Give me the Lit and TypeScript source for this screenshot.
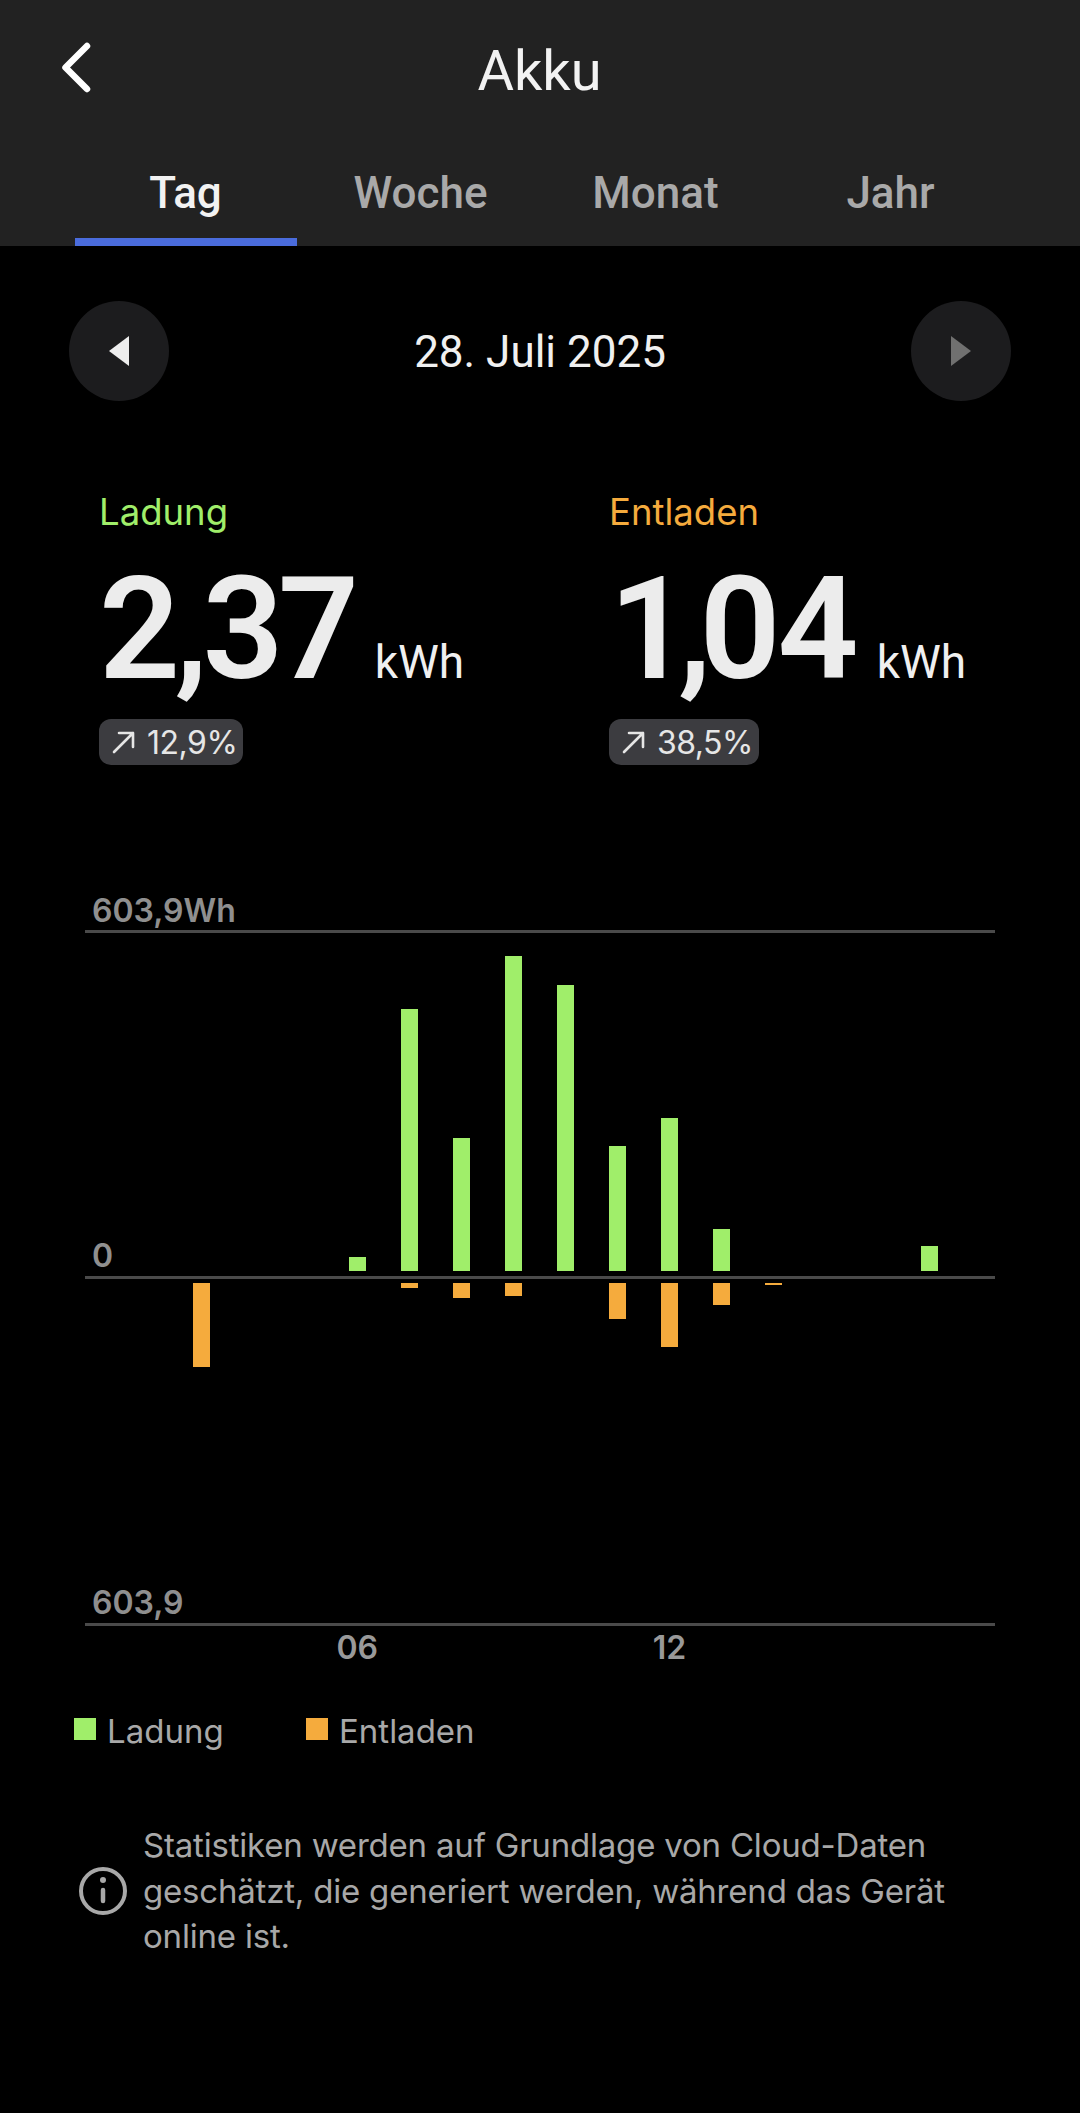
import { LitElement, html, css, svg } from 'lit';
import { customElement, state } from 'lit/decorators.js';

interface Stat {
    label: string;
    tone: string;
    whole: string;
    decimals: string;
    wholeTracking: number;
    decimalsTracking: number;
    change: string;
}

// hour -> height in px of the bars above and below the zero line
const HOURS: { hour: number; up: number; down: number }[] = [
    { hour: 2, up: 0, down: 0 },
    { hour: 3, up: 0, down: 84 },
    { hour: 4, up: 0, down: 0 },
    { hour: 5, up: 0, down: 0 },
    { hour: 6, up: 14, down: 0 },
    { hour: 7, up: 262, down: 5 },
    { hour: 8, up: 133, down: 15 },
    { hour: 9, up: 315, down: 13 },
    { hour: 10, up: 286, down: 0 },
    { hour: 11, up: 125, down: 36 },
    { hour: 12, up: 153, down: 64 },
    { hour: 13, up: 42, down: 22 },
    { hour: 14, up: 0, down: 2 },
    { hour: 15, up: 0, down: 0 },
    { hour: 16, up: 0, down: 0 },
    { hour: 17, up: 25, down: 0 },
];

@customElement('app-root')
export class AppRoot extends LitElement {
    static override styles = css`
        :host {
            display: block;
            width: 1080px;
            height: 2113px;
            background: #000;
            font-family: 'Inter', 'Roboto', sans-serif;
            overflow: hidden;
        }

        .header {
            background: #222222;
            height: 246px;
            display: flex;
            flex-direction: column;
        }

        .topbar {
            height: 142px;
            display: grid;
            grid-template-columns: 1fr auto 1fr;
            align-items: center;
            padding-left: 60px;
        }

        .topbar svg {
            display: block;
            width: 32px;
            height: 51px;
            margin-top: -7px;
        }

        .title {
            font-family: 'Roboto', sans-serif;
            font-size: 56px;
            line-height: 60px;
            color: #f2f2f2;
            margin-left: -61px;
        }

        .tabs {
            flex: 1;
            display: grid;
            grid-template-columns: repeat(4, 235px);
            padding-left: 68px;
        }

        .tab {
            display: flex;
            flex-direction: column;
            align-items: center;
            justify-content: flex-end;
            font-family: 'Roboto', sans-serif;
            font-weight: 500;
            font-size: 44px;
            line-height: 52px;
            color: #a9a9a9;
        }

        .tab span {
            margin-bottom: 19px;
        }

        .tab::after {
            content: '';
            display: block;
            width: 222px;
            height: 8px;
            background: transparent;
        }

        .tab.active {
            color: #f2f2f2;
        }

        .tab.active::after {
            background: #4a6cdc;
        }

        .datebar {
            display: flex;
            justify-content: space-between;
            align-items: center;
            padding: 55px 69px 0;
        }

        .round {
            width: 100px;
            height: 100px;
            border-radius: 50%;
            background: #1c1c1e;
            display: flex;
            align-items: center;
            justify-content: center;
        }

        .date {
            font-family: 'Roboto', sans-serif;
            font-size: 44px;
            line-height: 52px;
            color: #f0f0f0;
            padding-top: 2px;
        }

        .stats {
            display: grid;
            grid-template-columns: 510px 1fr;
            padding: 89px 0 0 99px;
        }

        .stat-label {
            font-size: 36.5px;
            line-height: 44px;
        }

        .stat-main {
            display: flex;
            align-items: baseline;
            margin-top: 16px;
            height: 160px;
        }

        .number {
            font-family: 'Roboto', sans-serif;
            font-weight: 600;
            font-size: 142px;
            line-height: 160px;
            color: #ececec;
        }

        .unit {
            font-family: 'Roboto', sans-serif;
            font-size: 46px;
            color: #f0f0f0;
            margin-left: 21px;
        }

        .badge {
            display: inline-flex;
            align-items: center;
            gap: 12px;
            height: 46px;
            padding: 0 6px 0 12px;
            border-radius: 12px;
            background: #3c3c40;
            font-size: 32px;
            letter-spacing: -0.5px;
            color: #e6e6e6;
            margin-top: 9px;
        }

        .chart {
            margin: 131px 85px 0;
            width: 910px;
        }

        .axis-row {
            height: 34px;
            padding: 0 0 2px 7px;
            box-sizing: border-box;
            font-weight: 600;
            font-size: 32px;
            line-height: 34px;
            color: #8f8f8f;
            display: flex;
            align-items: flex-end;
        }

        .line {
            height: 3px;
            background: #4a4a4a;
        }

        .plot {
            position: relative;
            display: grid;
            grid-template-columns: repeat(16, 52.05px);
            padding-left: 38px;
        }

        .plot.up {
            height: 343px;
            align-items: end;
            padding-bottom: 5px;
            box-sizing: border-box;
        }

        .plot.down {
            height: 344px;
            align-items: start;
            padding-top: 4px;
            box-sizing: border-box;
        }

        .plot > div {
            display: flex;
            justify-content: center;
        }

        .plot > .axis-label {
            position: absolute;
            left: 7px;
            bottom: 3px;
            font-weight: 600;
            font-size: 32px;
            line-height: 34px;
            color: #8f8f8f;
        }

        .bar {
            width: 17px;
        }

        .charge {
            background: #a0ee6a;
        }

        .discharge {
            background: #f5ab3d;
        }

        .hours {
            height: 44px;
            display: grid;
            grid-template-columns: repeat(16, 52.05px);
            padding-left: 38px;
            font-weight: 600;
            font-size: 32px;
            line-height: 44px;
            color: #999;
        }

        .hours span {
            display: flex;
            justify-content: center;
            white-space: nowrap;
        }

        .legend {
            display: flex;
            padding: 39px 0 0 74px;
            font-size: 33px;
            line-height: 44px;
            color: #a8a8a8;
        }

        .legend-item {
            display: flex;
            align-items: center;
            gap: 11px;
            width: 232px;
        }

        .swatch {
            width: 22px;
            height: 22px;
            margin-top: -4px;
        }

        .note {
            display: flex;
            align-items: center;
            gap: 16px;
            padding: 70px 60px 0 79px;
            font-size: 33px;
            line-height: 45.5px;
            letter-spacing: -0.2px;
            color: #a8a8a8;
        }

        .note svg {
            display: block;
            width: 48px;
            height: 48px;
            flex-shrink: 0;
        }
    `;

    @state() stats: Stat[] = [
        { label: 'Ladung', tone: '#a0ee6a', whole: '2,', decimals: '37', wholeTracking: -5.5, decimalsTracking: -5.5, change: '12,9%' },
        { label: 'Entladen', tone: '#f5ab3d', whole: '1,', decimals: '04', wholeTracking: -12, decimalsTracking: -3, change: '38,5%' },
    ];

    private renderStat(stat: Stat) {
        return html`
            <div>
                <div class="stat-label" style="color: ${stat.tone}">${stat.label}</div>
                <div class="stat-main">
                    <span class="number"><span style="letter-spacing: ${stat.wholeTracking}px">${stat.whole}</span><span style="letter-spacing: ${stat.decimalsTracking}px">${stat.decimals}</span></span>
                    <span class="unit">kWh</span>
                </div>
                <div class="badge">
                    <svg width="24" height="24" viewBox="0 0 24 24" fill="none" stroke="#e6e6e6" stroke-width="2.6" stroke-linecap="round" stroke-linejoin="round">
                        <path d="M3 22 L22 3 M8 3 H22 V17" />
                    </svg>
                    ${stat.change}
                </div>
            </div>
        `;
    }

    private triangle(direction: 'left' | 'right') {
        const points = direction === 'left' ? '20,0 20,30 0,15' : '0,0 0,30 20,15';
        const fill = direction === 'left' ? '#eeeeee' : '#707070';
        return html`<svg width="20" height="30" viewBox="0 0 20 30">
            ${svg`<polygon points=${points} fill=${fill} />`}
        </svg>`;
    }

    override render() {
        const tabs = ['Tag', 'Woche', 'Monat', 'Jahr'];
        return html`
            <div class="header">
                <div class="topbar">
                    <svg viewBox="0 0 32 51" fill="none" stroke="#fff" stroke-width="6.5" stroke-linecap="round" stroke-linejoin="round">
                        <path d="M27 4 L5.5 25.5 L27 47" />
                    </svg>
                    <div class="title">Akku</div>
                </div>
                <div class="tabs">
                    ${tabs.map((tab, i) => html`<div class="tab ${i === 0 ? 'active' : ''}"><span>${tab}</span></div>`)}
                </div>
            </div>

            <div class="datebar">
                <div class="round">${this.triangle('left')}</div>
                <div class="date">28. Juli 2025</div>
                <div class="round">${this.triangle('right')}</div>
            </div>

            <div class="stats">
                ${this.stats.map((stat) => this.renderStat(stat))}
            </div>

            <div class="chart">
                <div class="axis-row">603,9Wh</div>
                <div class="line"></div>
                <div class="plot up">
                    ${HOURS.map((h) => html`<div>${h.up ? html`<div class="bar charge" style="height: ${h.up}px"></div>` : ''}</div>`)}
                    <div class="axis-label">0</div>
                </div>
                <div class="line"></div>
                <div class="plot down">
                    ${HOURS.map((h) => html`<div>${h.down ? html`<div class="bar discharge" style="height: ${h.down}px"></div>` : ''}</div>`)}
                    <div class="axis-label">603,9</div>
                </div>
                <div class="line"></div>
                <div class="hours">
                    ${HOURS.map((h) => html`<span>${h.hour === 6 ? '06' : h.hour === 12 ? '12' : ''}</span>`)}
                </div>
            </div>

            <div class="legend">
                <div class="legend-item"><div class="swatch charge"></div>Ladung</div>
                <div class="legend-item"><div class="swatch discharge"></div>Entladen</div>
            </div>

            <div class="note">
                <svg viewBox="0 0 48 48" fill="none" stroke="#a8a8a8" stroke-width="4">
                    <circle cx="24" cy="24" r="22" />
                    <path d="M24 23 V34" stroke-width="4.5" stroke-linecap="round" />
                    <circle cx="24" cy="13" r="3" fill="#a8a8a8" stroke="none" />
                </svg>
                <div>Statistiken werden auf Grundlage von Cloud-Daten geschätzt, die generiert werden, während das Gerät online ist.</div>
            </div>
        `;
    }
}

declare global {
    interface HTMLElementTagNameMap {
        'app-root': AppRoot;
    }
}
